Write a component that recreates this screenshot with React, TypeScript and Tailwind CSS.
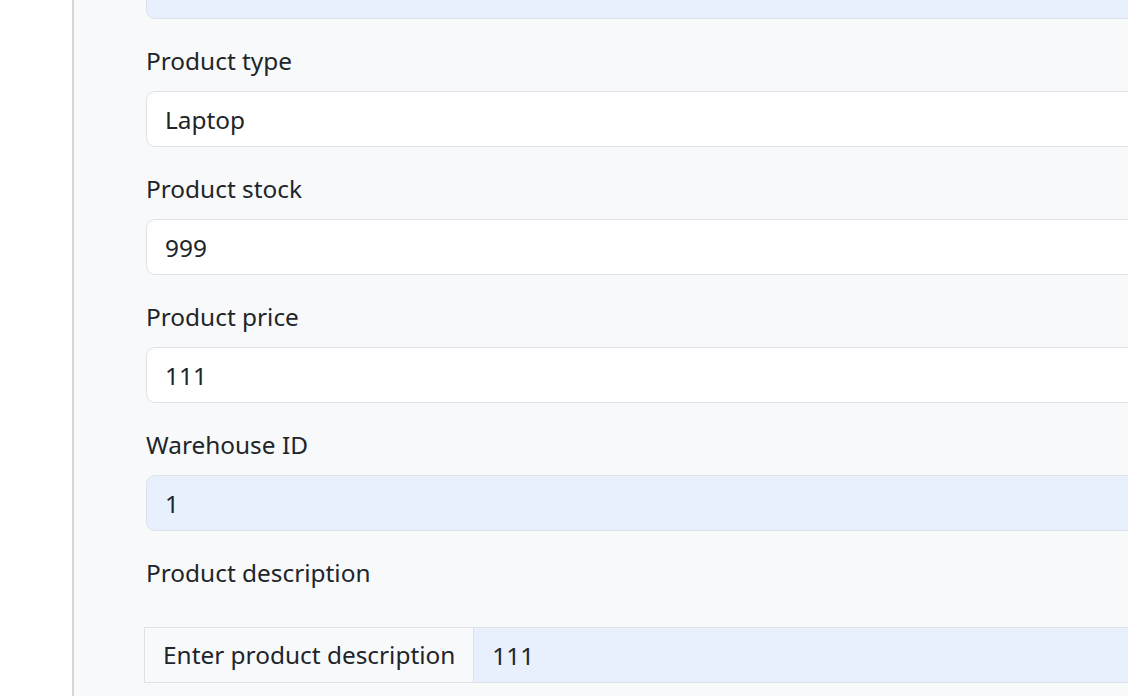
import React from 'react';

const inputBase =
  'block w-full h-[56px] px-[18px] text-[24.4px] leading-[36px] text-[#212529] border border-[#dee2e6] rounded-[9px] outline-none';

function Field({ label, value, autofill = false }: { label: string; value: string; autofill?: boolean }) {
  return (
    <div className="mb-[24px]">
      <label className="block mb-[12px] text-[24.4px] leading-[36px] text-[#212529]">{label}</label>
      <input
        readOnly
        value={value}
        className={`${inputBase} ${autofill ? 'bg-[#e8f0fe]' : 'bg-white'}`}
      />
    </div>
  );
}

export default function App() {
  return (
    <div
      className="flex h-screen w-full overflow-hidden bg-white"
      style={{ fontFamily: '"Noto Sans", "Open Sans", sans-serif' }}
    >
      {/* Sidebar gutter */}
      <div className="w-[72px] shrink-0 bg-white" />

      {/* Form area */}
      <div className="flex-1 min-w-0 border-l-2 border-[#d6d6d8] bg-[#f8f9fa] overflow-hidden">
        <div className="w-[1200px] pl-[72px]">
          <div className="-mt-[37px] mb-[24px]">
            <input readOnly value="" className={`${inputBase} bg-[#e8f0fe]`} />
          </div>

          <Field label="Product type" value="Laptop" />
          <Field label="Product stock" value="999" />
          <Field label="Product price" value="111" />
          <Field label="Warehouse ID" value="1" autofill />

          <label className="block mb-[36px] text-[24.4px] leading-[36px] text-[#212529]">
            Product description
          </label>
          <div className="flex -ml-[2px] h-[56px]">
            <span className="flex items-center px-[18px] text-[24.4px] text-[#212529] bg-[#f8f9fa] border border-[#dee2e6] whitespace-nowrap">
              Enter product description
            </span>
            <input
              readOnly
              value="111"
              className="flex-1 min-w-0 h-full px-[18px] text-[24.4px] text-[#212529] bg-[#e8f0fe] border border-l-0 border-[#dee2e6] outline-none"
            />
          </div>
        </div>
      </div>
    </div>
  );
}
